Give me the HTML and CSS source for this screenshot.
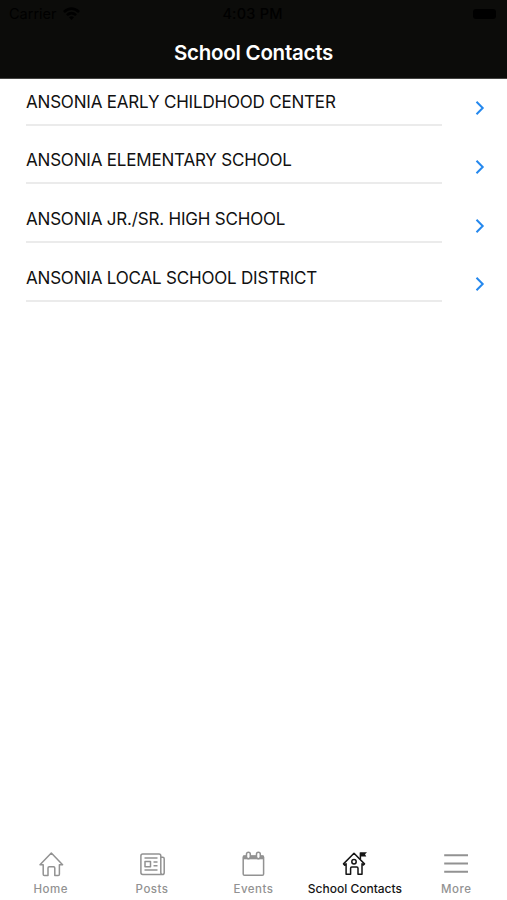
FILE: index.html
```
<!DOCTYPE html>
<html lang="en">
<head>
<meta charset="utf-8">
<meta name="viewport" content="width=device-width, initial-scale=1">
<title>School Contacts</title>
<link rel="stylesheet" href="styles.css">
</head>
<body>
	<div class="app">
		<header class="header">
			<div class="status">
				<div class="carrier">
					<span>Carrier</span>
					<svg width="17" height="13" viewBox="0 0 17 13"><path d="M0 4Q8.500 -3.500 17 4L15.200 6Q8.500 0 1.800 6ZM3 7.200Q8.500 2.400 14 7.200L12.200 9Q8.500 6 4.800 9ZM6 10.200Q8.500 8.200 11 10.200L8.500 13Z"/></svg>
				</div>
				<span class="time">4:03 PM</span>
				<div class="power"><span class="battery"></span></div>
			</div>
			<h1 class="title">School Contacts</h1>
		</header>

		<ul class="list">
			<li class="row">
				<a class="name">ANSONIA EARLY CHILDHOOD CENTER</a>
				<svg class="arrow" width="10" height="16" viewBox="0 0 10 16"><path d="M1.500 1.800L7.700 8L1.500 14.200"/></svg>
			</li>
			<li class="row">
				<a class="name">ANSONIA ELEMENTARY SCHOOL</a>
				<svg class="arrow" width="10" height="16" viewBox="0 0 10 16"><path d="M1.500 1.800L7.700 8L1.500 14.200"/></svg>
			</li>
			<li class="row">
				<a class="name">ANSONIA JR./SR. HIGH SCHOOL</a>
				<svg class="arrow" width="10" height="16" viewBox="0 0 10 16"><path d="M1.500 1.800L7.700 8L1.500 14.200"/></svg>
			</li>
			<li class="row">
				<a class="name">ANSONIA LOCAL SCHOOL DISTRICT</a>
				<svg class="arrow" width="10" height="16" viewBox="0 0 10 16"><path d="M1.500 1.800L7.700 8L1.500 14.200"/></svg>
			</li>
		</ul>

		<nav class="tabs">
			<a class="tab">
				<svg class="icon" width="28" height="28" viewBox="0 0 28 28"><path d="M3 14.800L14.300 3L25.600 14.800H22.400V24.200Q22.400 25.500 21.200 25.500H17.800V18Q17.800 16.800 16.600 16.800H12.200Q11 16.800 11 18V25.500H7.400Q6.200 25.500 6.200 24.200V14.800Z"/></svg>
				<span>Home</span>
			</a>
			<a class="tab">
				<svg class="icon" width="28" height="28" viewBox="0 0 28 28">
					<path d="M4.700 4H21Q22.800 4 22.800 5.800V22.600Q22.800 24.500 24.300 24.500H4.700Q2.900 24.500 2.900 22.600V5.900Q2.900 4 4.700 4ZM22.800 7.300H24.700Q26.200 7.300 26.200 8.800V22.700Q26.200 24.500 24.300 24.500"/>
					<path d="M6.500 8H19.500M15.500 12H19.500M15.500 15.700H19.500M6.500 20H19.500M7 11.500H12.500V16.700H7Z"/>
				</svg>
				<span>Posts</span>
			</a>
			<a class="tab">
				<svg class="icon" width="28" height="28" viewBox="0 0 28 28">
					<rect x="4.200" y="6" width="20.400" height="19.200" rx="1.300"/>
					<path class="solid" d="M4.200 5.500H24.600V9.300H4.200Z"/>
					<rect class="ring" x="7.500" y="2.200" width="3.800" height="6.500" rx="1.900"/>
					<rect class="ring" x="17.500" y="2.200" width="3.800" height="6.500" rx="1.900"/>
				</svg>
				<span>Events</span>
			</a>
			<a class="tab active">
				<svg class="icon" width="28" height="28" viewBox="0 0 28 28">
					<path d="M2.500 13.900L13 3.300L23.500 13.900L22.400 15L21 13.700V24.200H17V18.300Q17 17.100 15.800 17.100H10.800Q9.600 17.100 9.600 18.300V24.200H5.100V13.700L3.700 15.100Z"/>
					<circle cx="13" cy="11.700" r="2.200"/>
					<path d="M19.400 9V2.500"/>
					<path class="solid" d="M19.400 2.200H26L24 4.200L25.300 6.500H19.400Z"/>
				</svg>
				<span>School Contacts</span>
			</a>
			<a class="tab">
				<svg class="icon more" width="28" height="28" viewBox="0 0 28 28"><path d="M2.200 5.200H26M2.200 13.500H26M2.200 21.800H26"/></svg>
				<span>More</span>
			</a>
		</nav>
	</div>
</body>
</html>
```

FILE: styles.css
```
* {
    margin: 0;
    padding: 0;
    box-sizing: border-box;
}

body {
    background: #fff;
    font-family: Inter, "Liberation Sans", sans-serif;
    color: #111;
}

.app {
    height: 900px;
    display: flex;
    flex-direction: column;
}

/* header */
.header {
    height: 79px;
    background: #0c0c0a;
    border-bottom: 1px solid #444442;
}

.status {
    height: 27px;
    padding: 0 11px 0 9px;
    display: grid;
    grid-template-columns: 1fr auto 1fr;
    align-items: center;
    font-size: 14.5px;
    line-height: 27px;
    color: #000;
}

.carrier {
    display: flex;
    align-items: center;
    gap: 6px;
}

.time {
    font-weight: 500;
    letter-spacing: 0.2px;
}

.power {
    display: flex;
    justify-content: flex-end;
}

.battery {
    width: 23px;
    height: 10px;
    border-radius: 3px;
    background: #000;
}

.title {
    font-size: 20.5px;
    font-weight: 600;
    line-height: 51px;
    letter-spacing: -0.25px;
    text-align: center;
    color: #fff;
}

/* contacts */
.list {
    flex: 1;
    list-style: none;
}

.row {
    height: 58.67px;
    padding: 0 22px 0 26px;
    display: flex;
    align-items: center;
    justify-content: space-between;
}

.name {
    width: 416px;
    height: 35px;
    border-bottom: 2px solid #ebebeb;
    font-size: 17px;
    line-height: 22px;
    letter-spacing: -0.19px;
    white-space: nowrap;
}

.arrow {
    fill: none;
    stroke: #2488ee;
    stroke-width: 2;
}

/* bottom tabs */
.tabs {
    height: 50px;
    display: grid;
    grid-template-columns: repeat(5, 1fr);
}

.tab {
    display: flex;
    flex-direction: column;
    align-items: center;
    gap: 3px;
    font-size: 11.5px;
    font-weight: 500;
    line-height: 16px;
    letter-spacing: 0.5px;
    white-space: nowrap;
    color: #929292;
}

.active {
    color: #151515;
    font-size: 12px;
    letter-spacing: 0;
}

.icon {
    fill: none;
    stroke: currentColor;
    stroke-width: 1.5;
    stroke-linejoin: round;
}

.more {
    stroke-width: 2;
}

.icon .solid {
    fill: currentColor;
    stroke: none;
}

.icon .ring {
    fill: #fff;
}
```
